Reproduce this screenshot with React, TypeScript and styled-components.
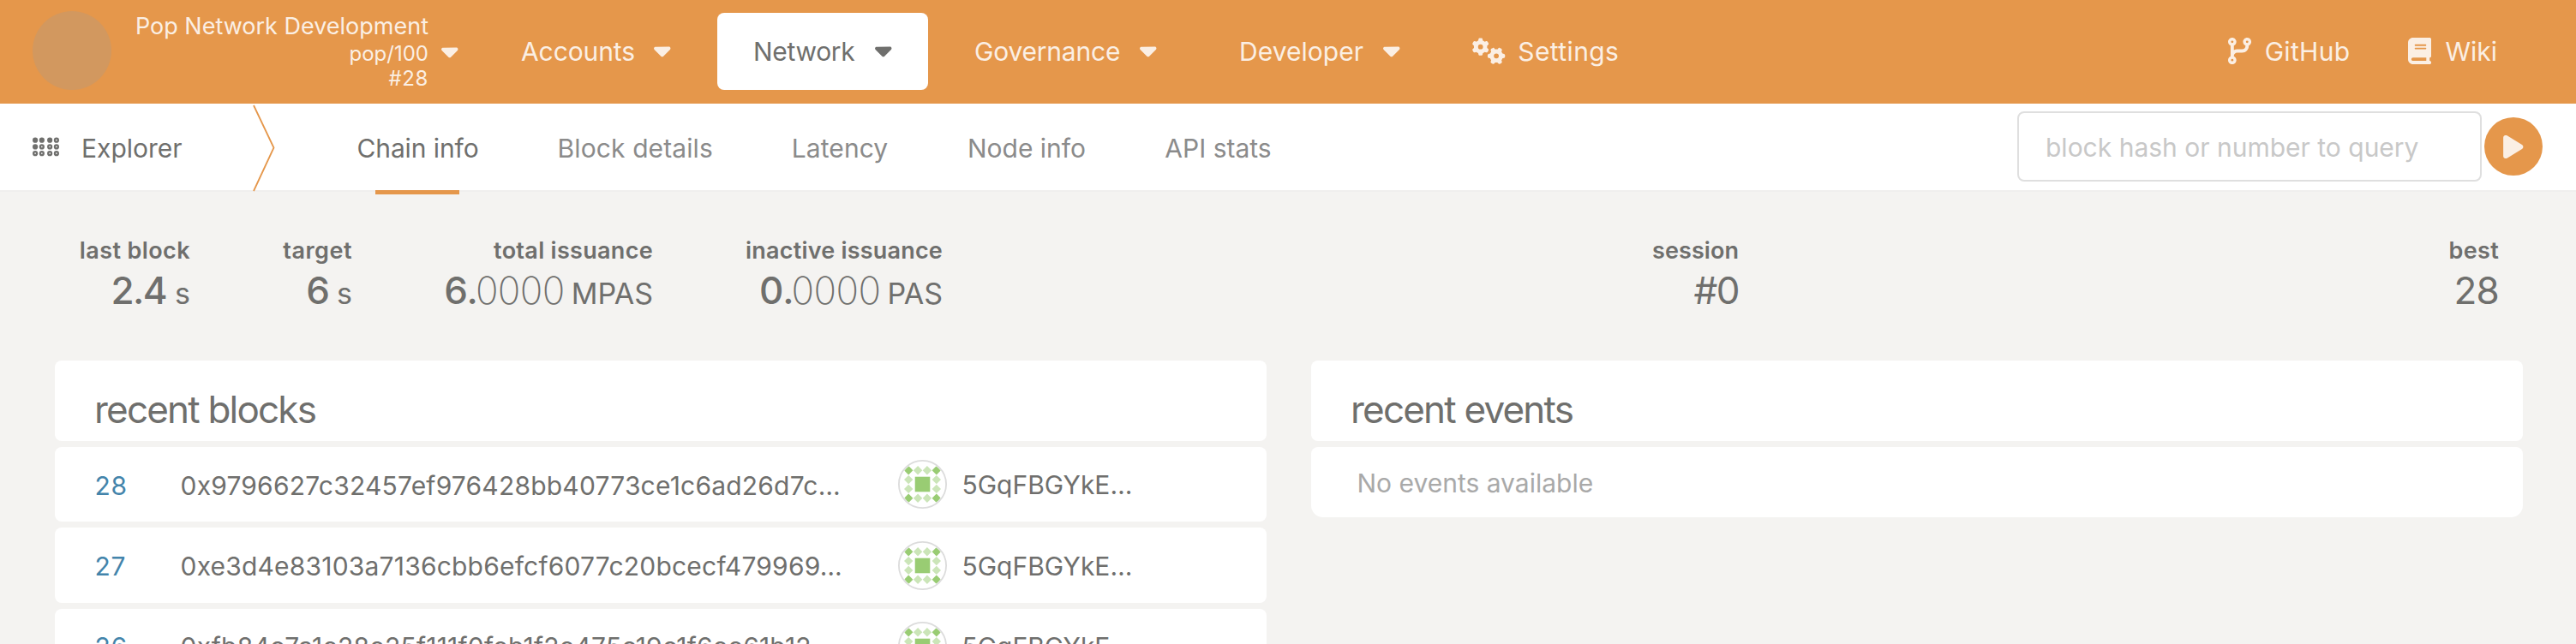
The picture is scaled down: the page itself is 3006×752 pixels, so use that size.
import React from "react";
import styled, { createGlobalStyle, css } from "styled-components";
import {
  FaBook,
  FaBraille,
  FaCaretDown,
  FaCodeBranch,
  FaGears,
  FaPlay,
} from "react-icons/fa6";

const color = {
  accent: "#e5974b",
  onAccent: "#fbefe4",
  page: "#f4f3f1",
  text: "#6f6f6d",
  muted: "#8b8b8b",
  faint: "#a9a9a9",
  placeholder: "#c8c8c8",
  link: "#4384ab",
  line: "#dfdfdf",
};

const GlobalStyle = createGlobalStyle`
  * { box-sizing: border-box; }
  html, body { margin: 0; padding: 0; }
  body {
    background: ${color.page};
    color: ${color.text};
    font-family: Inter, "Liberation Sans", sans-serif;
    font-size: 30px;
    overflow: hidden;
  }
`;

const Page = styled.div`
  height: 752px;
  overflow: hidden;
  white-space: nowrap;
`;

const Label = styled.span<{ $spacing?: number }>`
  letter-spacing: ${(p) => p.$spacing ?? 0}px;
`;

/* ---------- top bar ---------- */

const TopBar = styled.header`
  display: flex;
  align-items: center;
  height: 121px;
  padding: 0 92px 0 39px;
  background: ${color.accent};
  color: ${color.onAccent};
`;

const ChainLogo = styled.div`
  width: 92px;
  height: 92px;
  margin: -3px 0 0 -1px;
  border-radius: 50%;
  background: #d2985f;
`;

const ChainInfo = styled.div`
  width: 344px;
  margin: -2px 15px 0 26px;
  text-align: right;
  font-size: 24px;
  line-height: 29px;
`;

const ChainName = styled.div`
  font-size: 27px;
  line-height: 35px;
`;

const Caret = styled(FaCaretDown)`
  width: 19.5px;
  height: 31px;
  margin-top: -2px;
`;

const Nav = styled.nav`
  display: flex;
  gap: 12px;
  margin-left: 31.5px;
`;

const NavItem = styled.a<{ $width: number; $active?: boolean; $inset?: number }>`
  display: flex;
  align-items: center;
  justify-content: space-between;
  width: ${(p) => p.$width}px;
  height: 90px;
  margin-top: -1px;
  padding: 0 42.5px 1px ${(p) => p.$inset ?? 42}px;
  border-radius: 8px;
  ${(p) =>
    p.$active &&
    css`
      background: #fff;
      color: ${color.text};
    `}
`;

const IconLabel = styled.span<{ $gap: number }>`
  display: flex;
  align-items: center;
  gap: ${(p) => p.$gap}px;
`;

const GearsIcon = styled(FaGears)`
  width: 38.75px;
  height: 31px;
`;

const BranchIcon = styled(FaCodeBranch)`
  width: 27.1px;
  height: 31px;
`;

const BookIcon = styled(FaBook)`
  width: 27.1px;
  height: 31px;
`;

const External = styled.div`
  display: flex;
  gap: 68px;
  margin: -2px 0 0 auto;
`;

/* ---------- section bar ---------- */

const SectionBar = styled.div`
  display: flex;
  align-items: center;
  height: 103px;
  padding: 0 39px 0 38px;
  background: #fff;
  border-bottom: 2px solid #f0efee;
`;

const SectionName = styled.div`
  display: flex;
  align-items: center;
  width: 257px;
  padding-top: 3px;
`;

const SectionIcon = styled(FaBraille)`
  width: 31px;
  height: 24.8px;
  margin: -3px 26px 0 0;
`;

const Divider = styled.svg`
  display: block;
  width: 26px;
  height: 101px;
  overflow: visible;
`;

const Tabs = styled.div`
  display: flex;
  align-self: stretch;
  margin-left: 49px;
`;

const Tab = styled.a<{ $width: number; $active?: boolean }>`
  position: relative;
  display: flex;
  align-items: center;
  justify-content: center;
  width: ${(p) => p.$width}px;
  padding-top: 3px;
  color: ${(p) => (p.$active ? color.text : color.muted)};
  ${(p) =>
    p.$active &&
    css`
      &::after {
        content: "";
        position: absolute;
        bottom: -5px;
        left: 50%;
        width: 98px;
        height: 5px;
        margin-left: -49.5px;
        background: ${color.accent};
      }
    `}
`;

const Search = styled.div`
  display: flex;
  align-items: center;
  gap: 3px;
  margin: -1px 0 0 auto;
`;

const SearchInput = styled.input`
  width: 542px;
  height: 82px;
  padding: 2px 30px 0 31px;
  border: 2px solid ${color.line};
  border-radius: 8px;
  background: #fff;
  font: inherit;
  outline: none;
  &::placeholder {
    color: ${color.placeholder};
    opacity: 1;
  }
`;

const SearchButton = styled.button`
  display: flex;
  align-items: center;
  justify-content: center;
  width: 68px;
  height: 68px;
  padding: 0;
  border: 0;
  border-radius: 50%;
  background: ${color.accent};
  color: ${color.onAccent};
  svg {
    width: 23.5px;
    height: 31px;
  }
`;

/* ---------- summary ---------- */

const Summary = styled.section`
  display: flex;
  justify-content: space-between;
  height: 197px;
  padding: 51px 90px 0 92px;
`;

const SummaryGroup = styled.div`
  display: flex;
  gap: 108px;
`;

const Stat = styled.div<{ $width: number }>`
  display: flex;
  flex-direction: column;
  align-items: flex-end;
  width: ${(p) => p.$width}px;
`;

const StatLabel = styled.div<{ $spacing: number }>`
  font-size: 27px;
  font-weight: 600;
  line-height: 36px;
  letter-spacing: ${(p) => p.$spacing}px;
`;

const StatValue = styled.div<{ $spacing?: number; $weight?: number }>`
  display: flex;
  align-items: baseline;
  font-size: 44px;
  font-weight: ${(p) => p.$weight ?? 500};
  line-height: 56px;
  letter-spacing: ${(p) => p.$spacing ?? 0}px;
`;

const Decimals = styled.span`
  margin: 0 8px 0 -3px;
  font-weight: 200;
  letter-spacing: -0.6px;
`;

const Unit = styled.span<{ $gap?: number }>`
  margin-left: ${(p) => p.$gap ?? 0}px;
  font-size: 34px;
  font-weight: 400;
  letter-spacing: 0;
`;

/* ---------- tables ---------- */

const Columns = styled.main`
  display: grid;
  grid-template-columns: 1fr 1fr;
  gap: 52px;
  padding: 0 62px 0 64px;
`;

const Table = styled.section`
  display: flex;
  flex-direction: column;
  gap: 7px;
`;

const TableTitle = styled.h1`
  height: 94px;
  margin: 0;
  padding: 32px 0 0 46px;
  border-radius: 8px;
  background: #fff;
  font-size: 44px;
  font-weight: 400;
  line-height: 50px;
  letter-spacing: -1.8px;
`;

const BlockRow = styled.div`
  display: flex;
  align-items: center;
  height: 87.4px;
  padding-left: 46.5px;
  border-radius: 8px;
  background: #fff;
`;

const BlockNumber = styled.a`
  width: 100px;
  padding-top: 2px;
  color: ${color.link};
  letter-spacing: 0.8px;
`;

const BlockHash = styled.div`
  width: 837.5px;
  padding-top: 2px;
  letter-spacing: 0.2px;
`;

const Identicon = styled.svg`
  display: block;
  width: 57px;
  height: 57px;
`;

const Address = styled.div`
  margin: 2px 0 0 17.5px;
  line-height: 29px;
  overflow: hidden;
`;

const EmptyRow = styled.div`
  display: flex;
  align-items: center;
  height: 82px;
  padding: 2px 0 0 53.5px;
  border-radius: 8px 8px 14px 14px;
  background: #fff;
  color: ${color.faint};
`;

const navItems = [
  { label: "Accounts", width: 259, spacing: -0.1 },
  { label: "Network", width: 246, spacing: -0.3, active: true },
  { label: "Governance", width: 297, spacing: -0.2 },
  { label: "Developer", width: 272, spacing: 0.05 },
];

const tabs = [
  { label: "Chain info", width: 235, spacing: -0.1, active: true },
  { label: "Block details", width: 272.5, spacing: 0.1 },
  { label: "Latency", width: 205, spacing: 0.1 },
  { label: "Node info", width: 231, spacing: 0 },
  { label: "API stats", width: 216, spacing: 0 },
];

const blocks = [
  { number: "28", hash: "0x9796627c32457ef976428bb40773ce1c6ad26d7c…" },
  { number: "27", hash: "0xe3d4e83103a7136cbb6efcf6077c20bcecf479969…" },
  { number: "26", hash: "0xfb84c7a1e28e25f111f0feb1f2e475c19c1f6ee61b12…" },
];

const steps = [12.2, 23.1, 33.9, 44.8];

function AccountIcon({ id }: { id: string }) {
  return (
    <Identicon viewBox="0 0 57 57">
      <clipPath id={id}>
        <circle cx="28.5" cy="28.5" r="26.5" />
      </clipPath>
      <circle cx="28.5" cy="28.5" r="27.6" fill="#fff" stroke="#dcdcdc" strokeWidth="1.8" />
      <g clipPath={`url(#${id})`}>
        {steps.map((y, row) =>
          steps.map((x, col) => {
            const outerRow = row === 0 || row === 3;
            const outerCol = col === 0 || col === 3;
            if (!outerRow && !outerCol) return null;
            return (
              <path
                key={`${row}-${col}`}
                d={`M${x} ${y - 5.2}l5.2 5.2l-5.2 5.2l-5.2 -5.2z`}
                fill={outerRow && outerCol ? "#99cc73" : "#cbe5b8"}
              />
            );
          })
        )}
        <rect x="19.7" y="19.7" width="17.6" height="17.6" fill="#99cc73" />
      </g>
    </Identicon>
  );
}

export default function App() {
  return (
    <Page>
      <GlobalStyle />
      <TopBar>
        <ChainLogo />
        <ChainInfo>
          <ChainName>Pop Network Development</ChainName>
          <div>pop/100</div>
          <div>
            <Label $spacing={0.6}>#28</Label>
          </div>
        </ChainInfo>
        <Caret />
        <Nav>
          {navItems.map((item) => (
            <NavItem key={item.label} $width={item.width} $active={item.active}>
              <Label $spacing={item.spacing}>{item.label}</Label>
              <Caret />
            </NavItem>
          ))}
          <NavItem $width={260} $inset={30}>
            <IconLabel $gap={14.5}>
              <GearsIcon />
              <Label $spacing={0.4}>Settings</Label>
            </IconLabel>
          </NavItem>
        </Nav>
        <External>
          <IconLabel $gap={16}>
            <BranchIcon />
            <Label $spacing={0.3}>GitHub</Label>
          </IconLabel>
          <IconLabel $gap={16}>
            <BookIcon />
            <Label>Wiki</Label>
          </IconLabel>
        </External>
      </TopBar>

      <SectionBar>
        <SectionName>
          <SectionIcon />
          Explorer
        </SectionName>
        <Divider viewBox="0 0 26 101">
          <path d="M1 2L24.5 51.5L1 102" fill="none" stroke={color.accent} strokeWidth="1.8" />
        </Divider>
        <Tabs>
          {tabs.map((tab) => (
            <Tab key={tab.label} $width={tab.width} $active={tab.active}>
              <Label $spacing={tab.spacing}>{tab.label}</Label>
            </Tab>
          ))}
        </Tabs>
        <Search>
          <SearchInput placeholder="block hash or number to query" />
          <SearchButton>
            <FaPlay />
          </SearchButton>
        </Search>
      </SectionBar>

      <Summary>
        <SummaryGroup>
          <Stat $width={130}>
            <StatLabel $spacing={0.4}>last block</StatLabel>
            <StatValue $spacing={-1.6}>
              2.4<Unit $gap={10}>s</Unit>
            </StatValue>
          </Stat>
          <Stat $width={81}>
            <StatLabel $spacing={0.5}>target</StatLabel>
            <StatValue>
              6<Unit $gap={8}>s</Unit>
            </StatValue>
          </Stat>
          <Stat $width={243}>
            <StatLabel $spacing={0.3}>total issuance</StatLabel>
            <StatValue>
              6.<Decimals>0000</Decimals>
              <Unit>MPAS</Unit>
            </StatValue>
          </Stat>
          <Stat $width={230}>
            <StatLabel $spacing={0.2}>inactive issuance</StatLabel>
            <StatValue>
              0.<Decimals>0000</Decimals>
              <Unit>PAS</Unit>
            </StatValue>
          </Stat>
        </SummaryGroup>
        <Stat $width={100}>
          <StatLabel $spacing={0.06}>session</StatLabel>
          <StatValue $weight={400} $spacing={-1.5}>#0</StatValue>
        </Stat>
        <Stat $width={58}>
          <StatLabel $spacing={0.3}>best</StatLabel>
          <StatValue $weight={400} $spacing={-0.8}>28</StatValue>
        </Stat>
      </Summary>

      <Columns>
        <Table>
          <TableTitle>recent blocks</TableTitle>
          {blocks.map((block) => (
            <BlockRow key={block.number}>
              <BlockNumber>{block.number}</BlockNumber>
              <BlockHash>{block.hash}</BlockHash>
              <AccountIcon id={`account-${block.number}`} />
              <Address>5GqFBGYkE…</Address>
            </BlockRow>
          ))}
        </Table>
        <Table>
          <TableTitle>recent events</TableTitle>
          <EmptyRow>No events available</EmptyRow>
        </Table>
      </Columns>
    </Page>
  );
}
